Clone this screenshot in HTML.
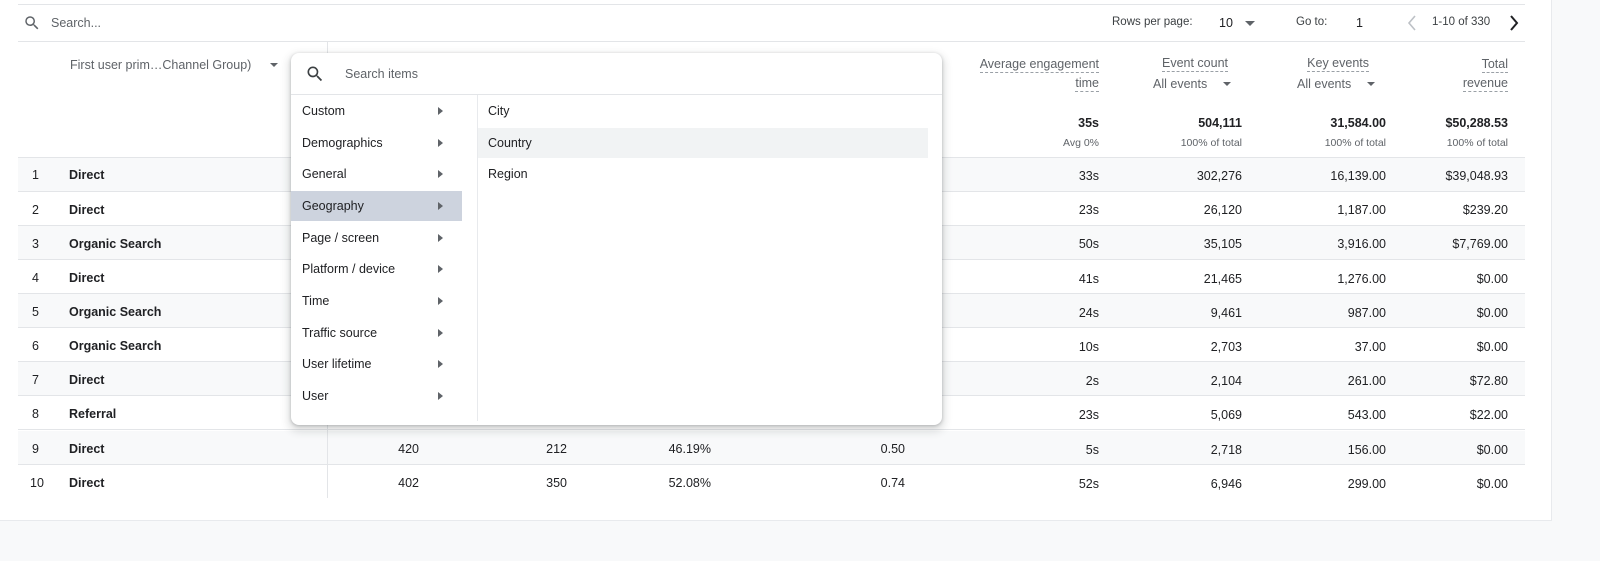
<!DOCTYPE html>
<html><head><style>
*{margin:0;padding:0;box-sizing:border-box}
body{width:1600px;height:561px;background:#f8f9fa;font-family:"Liberation Sans",sans-serif;font-size:12.5px;color:#202124;position:relative;overflow:hidden}
.card{position:absolute;left:0;top:0;width:1552px;height:521px;background:#fff;border-bottom:1px solid #e8eaed;border-right:1px solid #e8eaed}
.a{position:absolute;white-space:nowrap}
.r{text-align:right}
.row{position:absolute;left:18px;width:1507px;height:34px;border-bottom:1px solid #e3e5e8}
.g{background:#f8f9fa}
.hl{position:absolute;height:1px;background:#e3e5e8}
.grey{color:#5f6368}
.dash{border-bottom:1px dashed #9aa0a6;padding-bottom:1px}
.menu{position:absolute;left:291px;top:53px;width:651px;height:372px;background:#fff;border-radius:8px;box-shadow:0 1px 3px rgba(60,64,67,.3),0 4px 8px 3px rgba(60,64,67,.15)}
.mi{position:absolute;left:0;width:171px;height:30px;line-height:30px;padding-left:11px;white-space:nowrap}
.tri{position:absolute;left:147px;top:11px;width:0;height:0;border-left:5px solid #5f6368;border-top:4px solid transparent;border-bottom:4px solid transparent}
.cr{position:absolute;width:0;height:0;border-top:5px solid #5f6368;border-left:5px solid transparent;border-right:5px solid transparent}
.cs{position:absolute;width:0;height:0;border-top:4px solid #5f6368;border-left:4px solid transparent;border-right:4px solid transparent}
.n{position:absolute;left:32px}
.c{position:absolute;left:69px;font-weight:bold;white-space:nowrap}
.v{position:absolute;text-align:right;white-space:nowrap}
</style></head><body>
<div class="card">
<div class="hl" style="left:18px;top:4px;width:1507px"></div>
<div class="hl" style="left:18px;top:41px;width:1507px"></div>
<svg class="a" style="left:23px;top:14px" width="18" height="18" viewBox="0 0 24 24"><path d="M15.5 14h-.79l-.28-.27A6.47 6.47 0 0 0 16 9.5 6.5 6.5 0 1 0 9.5 16c1.61 0 3.09-.59 4.23-1.57l.27.28v.79l5 4.99L20.49 19l-4.99-5zm-6 0C7.01 14 5 11.99 5 9.5S7.01 5 9.5 5 14 7.01 14 9.5 11.99 14 9.5 14z" fill="#5f6368"/></svg>
<div class="a grey" style="left:51px;top:16px">Search...</div>
<div class="a" style="left:1112px;top:16px;font-size:11.5px;color:#3c4043">Rows per page:</div>
<div class="a" style="left:1219px;top:16px">10</div>
<div class="cr" style="left:1245px;top:21px"></div>
<div class="a" style="left:1296px;top:16px;font-size:11.5px;color:#3c4043">Go to:</div>
<div class="a" style="left:1356px;top:16px">1</div>
<svg class="a" style="left:1405px;top:13px" width="14" height="20" viewBox="0 0 14 20"><path d="M10 3 L4 10 L10 17" stroke="#bdc1c6" stroke-width="1.6" fill="none"/></svg>
<div class="a" style="left:1432px;top:16px;font-size:11.5px;color:#3c4043">1-10 of 330</div>
<svg class="a" style="left:1507px;top:13px" width="14" height="20" viewBox="0 0 14 20"><path d="M4 3 L10 10 L4 17" stroke="#202124" stroke-width="2" fill="none"/></svg>

<div class="a grey" style="left:70px;top:58px">First user prim…Channel Group)</div>
<div class="cs" style="left:270px;top:63px"></div>

<div class="a r grey" style="right:452px;top:55px;line-height:19px"><span class="dash">Average engagement</span><br><span class="dash">time</span></div>
<div class="a r grey" style="right:323px;top:56px"><span class="dash">Event count</span></div>
<div class="a grey" style="left:1153px;top:77px">All events</div>
<div class="cs" style="left:1223px;top:82px"></div>
<div class="a r grey" style="right:182px;top:56px"><span class="dash">Key events</span></div>
<div class="a grey" style="left:1297px;top:77px">All events</div>
<div class="cs" style="left:1367px;top:82px"></div>
<div class="a r grey" style="right:43px;top:55px;line-height:19px"><span class="dash">Total</span><br><span class="dash">revenue</span></div>

<div class="a r" style="right:452px;top:116px;font-weight:bold">35s</div>
<div class="a r grey" style="right:452px;top:137px;font-size:10.5px">Avg 0%</div>
<div class="a r" style="right:309px;top:116px;font-weight:bold">504,111</div>
<div class="a r grey" style="right:309px;top:137px;font-size:10.5px">100% of total</div>
<div class="a r" style="right:165px;top:116px;font-weight:bold">31,584.00</div>
<div class="a r grey" style="right:165px;top:137px;font-size:10.5px">100% of total</div>
<div class="a r" style="right:43px;top:116px;font-weight:bold">$50,288.53</div>
<div class="a r grey" style="right:43px;top:137px;font-size:10.5px">100% of total</div>
<div class="hl" style="left:18px;top:157px;width:1507px"></div>

<div class="row g" style="top:158px"></div>
<div class="row" style="top:192px"></div>
<div class="row g" style="top:226px"></div>
<div class="row" style="top:260px"></div>
<div class="row g" style="top:294px"></div>
<div class="row" style="top:328px"></div>
<div class="row g" style="top:362px"></div>
<div class="row" style="top:396px"></div>
<div class="row g" style="top:431px"></div>
<div class="row" style="top:465px;border-bottom:none"></div>
<div class="a" style="left:327px;top:42px;width:1px;height:456px;background:#e3e5e8"></div>

<div class="n" style="top:168px">1</div><div class="c" style="top:168px">Direct</div>
<div class="n" style="top:203px">2</div><div class="c" style="top:203px">Direct</div>
<div class="n" style="top:237px">3</div><div class="c" style="top:237px">Organic Search</div>
<div class="n" style="top:271px">4</div><div class="c" style="top:271px">Direct</div>
<div class="n" style="top:305px">5</div><div class="c" style="top:305px">Organic Search</div>
<div class="n" style="top:339px">6</div><div class="c" style="top:339px">Organic Search</div>
<div class="n" style="top:373px">7</div><div class="c" style="top:373px">Direct</div>
<div class="n" style="top:407px">8</div><div class="c" style="top:407px">Referral</div>
<div class="n" style="top:442px">9</div><div class="c" style="top:442px">Direct</div>
<div class="n" style="top:476px;left:30px">10</div><div class="c" style="top:476px">Direct</div>

<div class="v" style="right:452px;top:159px;line-height:34.2px">33s<br>23s<br>50s<br>41s<br>24s<br>10s<br>2s<br>23s<br>5s<br>52s</div>
<div class="v" style="right:309px;top:159px;line-height:34.2px">302,276<br>26,120<br>35,105<br>21,465<br>9,461<br>2,703<br>2,104<br>5,069<br>2,718<br>6,946</div>
<div class="v" style="right:165px;top:159px;line-height:34.2px">16,139.00<br>1,187.00<br>3,916.00<br>1,276.00<br>987.00<br>37.00<br>261.00<br>543.00<br>156.00<br>299.00</div>
<div class="v" style="right:43px;top:159px;line-height:34.2px">$39,048.93<br>$239.20<br>$7,769.00<br>$0.00<br>$0.00<br>$0.00<br>$72.80<br>$22.00<br>$0.00<br>$0.00</div>
<div class="v" style="right:1132px;top:442px">420</div><div class="v" style="right:1132px;top:476px">402</div>
<div class="v" style="right:984px;top:442px">212</div><div class="v" style="right:984px;top:476px">350</div>
<div class="v" style="right:840px;top:442px">46.19%</div><div class="v" style="right:840px;top:476px">52.08%</div>
<div class="v" style="right:646px;top:442px">0.50</div><div class="v" style="right:646px;top:476px">0.74</div>
</div>

<div class="menu">
<svg class="a" style="left:14px;top:11px" width="20" height="20" viewBox="0 0 24 24"><path d="M15.5 14h-.79l-.28-.27A6.47 6.47 0 0 0 16 9.5 6.5 6.5 0 1 0 9.5 16c1.61 0 3.09-.59 4.23-1.57l.27.28v.79l5 4.99L20.49 19l-4.99-5zm-6 0C7.01 14 5 11.99 5 9.5S7.01 5 9.5 5 14 7.01 14 9.5 11.99 14 9.5 14z" fill="#3c4043"/></svg>
<div class="a grey" style="left:54px;top:14px">Search items</div>
<div class="hl" style="left:0;top:41px;width:651px"></div>
<div class="a" style="left:186px;top:42px;width:1px;height:326px;background:#e8eaed"></div>
<div class="mi" style="top:43px">Custom<span class="tri"></span></div>
<div class="mi" style="top:75px">Demographics<span class="tri"></span></div>
<div class="mi" style="top:106px">General<span class="tri"></span></div>
<div class="mi" style="top:138px;background:#cdd3de">Geography<span class="tri"></span></div>
<div class="mi" style="top:170px">Page / screen<span class="tri"></span></div>
<div class="mi" style="top:201px">Platform / device<span class="tri"></span></div>
<div class="mi" style="top:233px">Time<span class="tri"></span></div>
<div class="mi" style="top:265px">Traffic source<span class="tri"></span></div>
<div class="mi" style="top:296px">User lifetime<span class="tri"></span></div>
<div class="mi" style="top:328px">User<span class="tri"></span></div>
<div class="a" style="left:197px;top:51px">City</div>
<div class="a" style="left:187px;top:75px;width:450px;height:30px;background:#f1f3f4"></div>
<div class="a" style="left:197px;top:83px">Country</div>
<div class="a" style="left:197px;top:114px">Region</div>
</div>
</body></html>
